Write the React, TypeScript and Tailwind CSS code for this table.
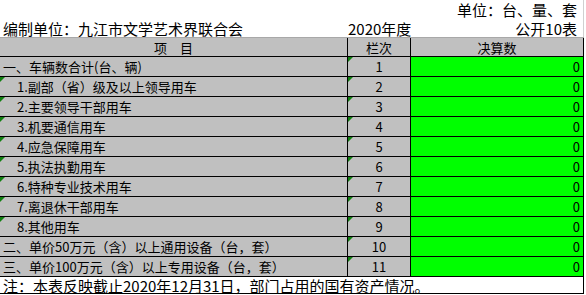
import React from "react";

type Row = { name: string; no: number; indent: boolean; mark: boolean };

const rows: Row[] = [
    { name: "一、车辆数合计(台、辆)", no: 1, indent: false, mark: false },
    { name: "1.副部（省）级及以上领导用车", no: 2, indent: true, mark: true },
    { name: "2.主要领导干部用车", no: 3, indent: true, mark: true },
    { name: "3.机要通信用车", no: 4, indent: true, mark: true },
    { name: "4.应急保障用车", no: 5, indent: true, mark: true },
    { name: "5.执法执勤用车", no: 6, indent: true, mark: true },
    { name: "6.特种专业技术用车", no: 7, indent: true, mark: true },
    { name: "7.离退休干部用车", no: 8, indent: true, mark: true },
    { name: "8.其他用车", no: 9, indent: true, mark: true },
    { name: "二、单价50万元（含）以上通用设备（台，套）", no: 10, indent: false, mark: false },
    { name: "三、单价100万元（含）以上专用设备（台，套）", no: 11, indent: false, mark: false },
];

// little green "number stored as text" corner
function Mark() {
    return (
        <span className="absolute left-0 top-0 w-0 h-0 border-t-[5px] border-t-[#108010] border-r-[5px] border-r-transparent" />
    );
}

export default function App() {
    return (
        <div className="w-[586px] h-[295px] bg-white overflow-hidden text-black font-['Noto_Sans_CJK_SC',sans-serif]">
            {/* Title area */}
            <div className="w-[584px] border-r border-r-[#d0d0d0] whitespace-nowrap">
                <div className="h-[19px] flex items-start justify-end pt-[2px] pr-[6px] text-[15px] leading-[15px]">
                    单位：台、量、套
                </div>
                <div className="h-[18px] flex items-end pb-[1px] text-[15px] leading-[15px]">
                    <div className="w-[348px] shrink-0 pl-[3px]">编制单位：九江市文学艺术界联合会</div>
                    <div className="w-[63px] shrink-0 text-center">2020年度</div>
                    <div className="flex-1 text-right pr-[6px]">公开10表</div>
                </div>
            </div>

            {/* Table */}
            <div className="w-[584px] text-[13px] leading-none whitespace-nowrap">
                <div className="h-[20px] flex bg-[#c0c0c0] border-t border-t-[#a8a8a8] border-b border-b-black">
                    <div className="w-[348px] border-r border-r-black flex items-center justify-center">项　目</div>
                    <div className="w-[63px] border-r border-r-black flex items-center justify-center">栏次</div>
                    <div className="w-[173px] border-r border-r-black flex items-center justify-center">决算数</div>
                </div>
                {rows.map(r => (
                    <div key={r.no} className="h-[20px] flex border-b border-b-black">
                        <div
                            className={`relative w-[348px] bg-[#c0c0c0] border-r border-r-black flex items-center ${r.indent ? "pl-[17px]" : "pl-[3px]"}`}
                        >
                            {r.mark && <Mark />}
                            {r.name}
                        </div>
                        <div className="relative w-[63px] bg-[#c0c0c0] border-r border-r-black flex items-center justify-center">
                            <Mark />
                            {r.no}
                        </div>
                        <div className="w-[173px] bg-[#00ff00] border-r border-r-black flex items-center justify-end pr-[3px]">
                            0
                        </div>
                    </div>
                ))}
                <div className="h-[17px] flex items-center border-b border-b-black border-r border-r-black pl-[3px] text-[15px]">
                    注：本表反映截止2020年12月31日，部门占用的国有资产情况。
                </div>
            </div>
        </div>
    );
}
